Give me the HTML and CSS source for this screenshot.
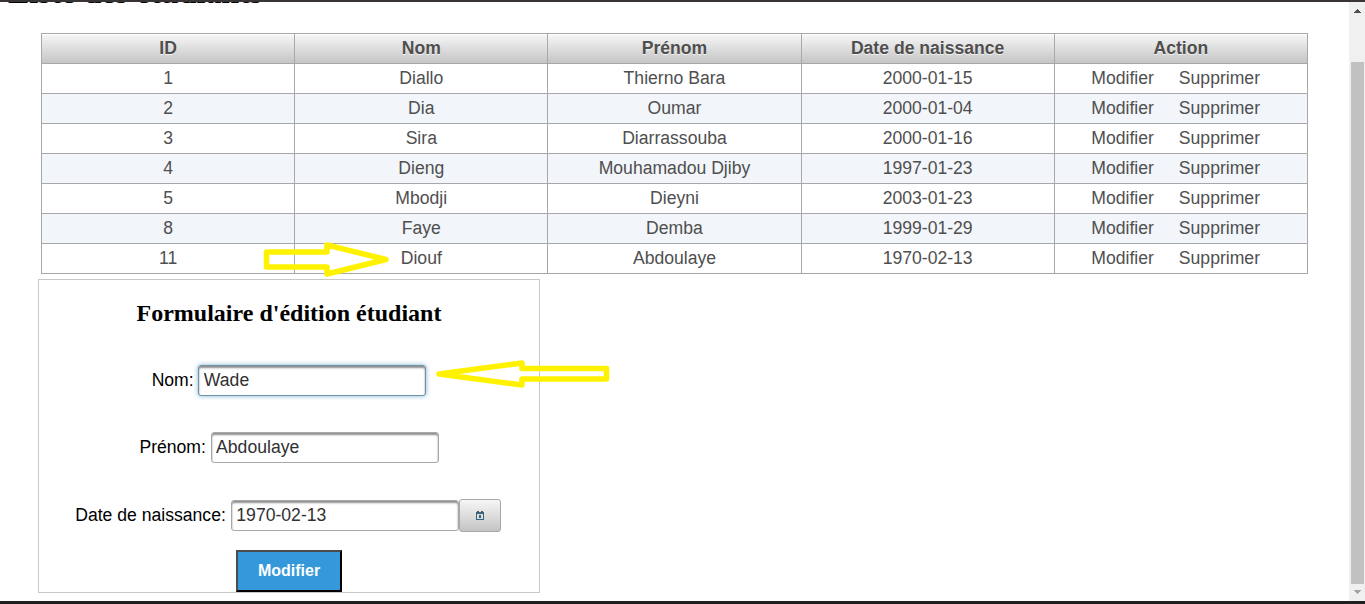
FILE: index.html
```html
<!DOCTYPE html>
<html lang="fr">
<head>
<meta charset="utf-8">
<title>Liste des étudiants</title>
<link rel="stylesheet" href="styles.css">
</head>
<body>
<div class="window">
  <main class="page">
    <h1 class="title">Liste des étudiants</h1>
    <table class="students">
      <thead><tr><th>ID</th><th>Nom</th><th>Prénom</th><th>Date de naissance</th><th>Action</th></tr></thead>
      <tbody>
        <tr><td>1</td><td>Diallo</td><td>Thierno Bara</td><td>2000-01-15</td><td><a class="link">Modifier</a><a class="link">Supprimer</a></td></tr>
        <tr><td>2</td><td>Dia</td><td>Oumar</td><td>2000-01-04</td><td><a class="link">Modifier</a><a class="link">Supprimer</a></td></tr>
        <tr><td>3</td><td>Sira</td><td>Diarrassouba</td><td>2000-01-16</td><td><a class="link">Modifier</a><a class="link">Supprimer</a></td></tr>
        <tr><td>4</td><td>Dieng</td><td>Mouhamadou Djiby</td><td>1997-01-23</td><td><a class="link">Modifier</a><a class="link">Supprimer</a></td></tr>
        <tr><td>5</td><td>Mbodji</td><td>Dieyni</td><td>2003-01-23</td><td><a class="link">Modifier</a><a class="link">Supprimer</a></td></tr>
        <tr><td>8</td><td>Faye</td><td>Demba</td><td>1999-01-29</td><td><a class="link">Modifier</a><a class="link">Supprimer</a></td></tr>
        <tr><td>11</td><td>Diouf</td><td>Abdoulaye</td><td>1970-02-13</td><td><a class="link">Modifier</a><a class="link">Supprimer</a></td></tr>
      </tbody>
    </table>
    <form class="editor">
      <h2 class="editor-title">Formulaire d'édition étudiant</h2>
      <div class="field"><label for="nom">Nom:</label><input id="nom" class="input active" value="Wade"></div>
      <div class="field"><label for="prenom">Prénom:</label><input id="prenom" class="input" value="Abdoulaye"></div>
      <div class="field field-date"><label for="date">Date de naissance:</label><input id="date" class="input" value="1970-02-13"><button class="calendar" type="button" aria-label="Calendrier"><svg width="8" height="9" viewBox="0 0 8 9" shape-rendering="crispEdges"><path fill="#3b6379" fill-rule="evenodd" d="M1 0h2v1h2V0h2v1h1v8H0V1h1zM1 3v5h6V3zM3 4h2v3H3z"/></svg></button></div>
      <button class="submit" type="button">Modifier</button>
    </form>
    <svg class="mark mark-right" width="130" height="38" viewBox="0 0 130 38"><path d="M6.500 12H67V5L126 19.500 67 34V27H6.500z"/></svg>
    <svg class="mark mark-left" width="176" height="30" viewBox="0 0 176 30"><path d="M171.500 9.500H87V4L4 15 87 26V20H171.500z"/></svg>
  </main>
  <div class="scrollbar">
    <svg width="7" height="4" viewBox="0 0 7 4" shape-rendering="crispEdges"><path fill="#505050" d="M3 0h1v1h1v1h1v1h1v1H0V3h1V2h1V1h1z"/></svg>
    <div class="thumb"></div>
    <svg width="7" height="4" viewBox="0 0 7 4" shape-rendering="crispEdges"><path fill="#a3a3a3" d="M0 0h7v1H6v1H5v1H4v1H3V3H2V2H1V1H0z"/></svg>
  </div>
</div>
</body>
</html>
```
FILE: styles.css
```css
* { box-sizing: border-box; }
body { margin: 0; background: #fff; overflow: hidden; }
.window {
  display: flex;
  height: 604px;
  border-top: 2px solid #383436;
  border-bottom: 3px solid #202020;
}
.page {
  position: relative;
  flex: 1;
  overflow: hidden;
  font-family: "Liberation Sans", Arial, sans-serif;
  font-size: 17.6px;
}
.title {
  margin: -28px 0 22px 8px;
  height: 37px;
  font: bold 32px/37px "Liberation Serif", "Times New Roman", serif;
  color: #000;
}
.students {
  width: 1267px;
  margin-left: 41px;
  border-collapse: collapse;
  table-layout: fixed;
  color: #4f4f4f;
}
.students tr { height: 30px; }
.students th, .students td {
  border: 1px solid #a8a8a8;
  padding: 0 0 2px;
  line-height: 20px;
  text-align: center;
}
.students th {
  background: linear-gradient(#f6f6f6, #c4c4c4);
  box-shadow: inset 0 1px #fff;
  text-shadow: 0 1px rgba(255, 255, 255, .7);
}
.students tbody tr:nth-child(even) { background: #f2f5f9; }
.link { margin: 0 12.500px; }
.link:first-child { margin-left: 2px; }
.editor {
  display: flex;
  flex-direction: column;
  align-items: center;
  width: 502px;
  height: 314px;
  margin: 5px 0 0 38px;
  border: 1px solid #c8c8c8;
}
.editor-title {
  margin: 20px 0 38px;
  font: bold 24px/27px "Liberation Serif", "Times New Roman", serif;
}
.field { display: flex; align-items: center; height: 31px; margin-bottom: 36px; }
.field label { margin-right: 4.700px; }
.field-date { margin: 1px 2px 36px 0; }
.field-date label { margin-right: 5px; }
.input {
  width: 228px;
  height: 31px;
  padding: 3px 4.500px;
  border: 1px solid #a8a8a8;
  border-radius: 3px;
  outline: 0;
  background: #fff;
  box-shadow: inset 0 2px 2px #8f8f8f;
  font: 17.6px "Liberation Sans", Arial, sans-serif;
  color: #313131;
}
.input.active { border-color: #6a92aa; box-shadow: 0 0 5px #85b2cb, inset 0 2px 2px #8f8f8f; }
.calendar {
  display: flex;
  align-items: center;
  justify-content: center;
  width: 42px;
  height: 33px;
  padding: 0;
  border: 1px solid #a8a8a8;
  border-radius: 3px;
  background: linear-gradient(#f6f6f6, #c4c4c4);
}
.submit {
  width: 106px;
  height: 42px;
  margin-top: -17px;
  padding: 0;
  border: 2px outset #000;
  border-color: #4c4c4c #000 #000 #4c4c4c;
  background: #3498db;
  color: #fff;
  font: bold 16px "Liberation Sans", Arial, sans-serif;
}
.mark { position: absolute; fill: none; stroke: #fff200; stroke-width: 5.500; stroke-linejoin: round; }
.mark-right { left: 260px; top: 238px; }
.mark-left { left: 435px; top: 357px; }
.scrollbar {
  display: flex;
  flex-direction: column;
  align-items: center;
  width: 16px;
  padding: 7px 0 5px;
  background: #f0f0f0;
}
.thumb { width: 13px; height: 522px; margin: 49px 0 6px; background: #c1c1c1; flex: none; }
```
